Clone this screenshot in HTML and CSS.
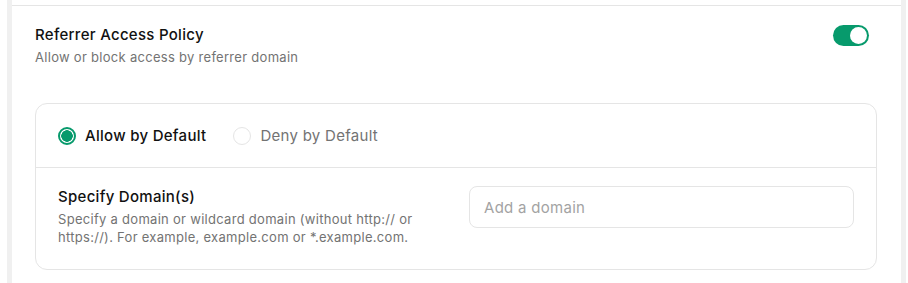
FILE: index.html
```html
<!DOCTYPE html>
<html>
<head>
<meta charset="utf-8">
<link rel="stylesheet" href="styles.css">
</head>
<body>
<div class="shell">
  <section class="panel">
    <div class="header">
      <div class="header-text">
        <div class="title">Referrer Access Policy</div>
        <div class="subtitle">Allow or block access by referrer domain</div>
      </div>
      <div class="toggle"><span class="knob"></span></div>
    </div>
    <div class="card">
      <div class="radios">
        <label class="radio checked"><span class="dot"></span><span class="radio-label">Allow by Default</span></label>
        <label class="radio"><span class="dot"></span><span class="radio-label">Deny by Default</span></label>
      </div>
      <div class="domains">
        <div class="domains-text">
          <div class="field-title">Specify Domain(s)</div>
          <div class="field-desc">Specify a domain or wildcard domain (without http:// or https://). For example, example.com or *.example.com.</div>
        </div>
        <div class="input">Add a domain</div>
      </div>
    </div>
  </section>
</div>
</body>
</html>
```
FILE: styles.css
```css
* { box-sizing: border-box; }
html, body { margin: 0; background: #fff; }
body { font-family: Inter, "Noto Sans", sans-serif; color: #171717; letter-spacing: 0.018em; }
.shell {
  margin-left: 7px;
  width: 899px;
  height: 283px;
  border-left: 5px solid #f0f0f0;
  border-right: 5px solid #f0f0f0;
  overflow: hidden;
}
.panel {
  margin-top: 5px;
  border-top: 1px solid #e5e5e5;
  padding: 18px 24px 0 23px;
}
.header { display: flex; justify-content: space-between; align-items: flex-start; }
.title { font-size: 15px; font-weight: 500; line-height: 22px; color: #111; }
.subtitle { font-size: 13px; line-height: 20px; color: #737373; margin-top: 1px; }
.toggle {
  width: 36px; height: 21px; border-radius: 11px; background: #079a6c;
  margin-top: 1px; margin-right: 8px; position: relative;
}
.knob {
  position: absolute; right: 2px; top: 2px; width: 17px; height: 17px;
  border-radius: 50%; background: #fff;
}
.card {
  margin-top: 36px;
  border: 1px solid #e5e5e5;
  border-radius: 12px;
}
.radios {
  display: flex; gap: 27px; align-items: center;
  padding: 21px 24px 20px 22px;
  border-bottom: 1px solid #e5e5e5;
}
.radio { display: flex; align-items: center; gap: 9px; font-size: 15px; line-height: 22px; font-weight: 500; color: #737373; }
.radio.checked { color: #111; }
.dot { width: 18px; height: 18px; border-radius: 50%; border: 1px solid #e5e5e5; display: inline-block; }
.radio.checked .dot { border: 2px solid #079a6c; background: radial-gradient(circle, #079a6c 0 5.5px, #fff 6px); }
.radio:not(.checked) .radio-label { font-weight: 400; }
.domains {
  display: grid; grid-template-columns: 1fr 385px; gap: 26px; align-items: start;
  padding: 18px 22px 23px 22px;
}
.field-title { font-size: 15px; font-weight: 500; line-height: 22px; color: #111; }
.field-desc { font-size: 13px; line-height: 18px; color: #737373; margin-top: 2px; max-width: 360px; }
.input {
  height: 42px; border: 1px solid #e5e5e5; border-radius: 8px;
  padding: 0 14px; display: flex; align-items: center;
  font-size: 15px; color: #a3a3a3;
}
```
